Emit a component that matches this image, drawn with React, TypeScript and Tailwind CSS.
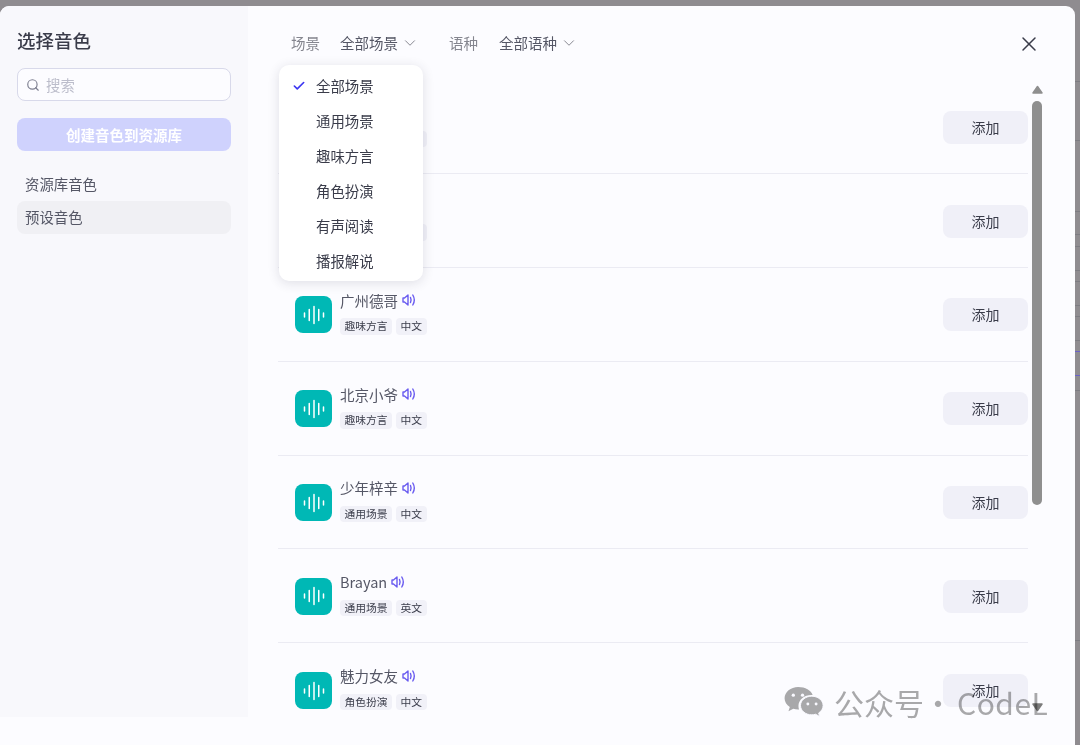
import { Check, ChevronDown, Search, X } from "lucide-react";

const rows = [
  { name: "", tag: "通用场景", lang: "中文" },
  { name: "", tag: "通用场景", lang: "中文" },
  { name: "广州德哥", tag: "趣味方言", lang: "中文" },
  { name: "北京小爷", tag: "趣味方言", lang: "中文" },
  { name: "少年梓辛", tag: "通用场景", lang: "中文" },
  { name: "Brayan", tag: "通用场景", lang: "英文" },
  { name: "魅力女友", tag: "角色扮演", lang: "中文" },
];

const scenes = ["全部场景", "通用场景", "趣味方言", "角色扮演", "有声阅读", "播报解说"];

// faint lines of the page behind the modal, seen in the strip on the right
const backLines = [
  { y: 81, c: "#7d7c82" },
  { y: 140, c: "#7d7c82" },
  { y: 211, c: "#7d7c82" },
  { y: 234, c: "#7d7c82" },
  { y: 246, c: "#7d7c82" },
  { y: 270, c: "#7d7c82" },
  { y: 281, c: "#7d7c82" },
  { y: 305, c: "#7d7c82" },
  { y: 316, c: "#7d7c82" },
  { y: 340, c: "#7d7c82" },
  { y: 351, c: "#6a62c8" },
  { y: 375, c: "#6a62c8" },
  { y: 390, c: "#7d7c82" },
  { y: 640, c: "#7d7c82" },
];

function WaveIcon() {
  return (
    <div className="flex h-[37px] w-[37px] shrink-0 items-center justify-center rounded-[8px] bg-[#00b8b5]">
      <svg width="22" height="20" viewBox="0 0 22 20" fill="none" stroke="#ffffff" strokeWidth="1.5" strokeLinecap="round">
        <path d="M1.500 8v4M6.250 4.500v11M11 1.500v17M15.750 4.500v11M20.500 8v4" />
      </svg>
    </div>
  );
}

function SpeakerIcon() {
  return (
    <svg width="14" height="14" viewBox="0 0 14 14" fill="none" stroke="#6a5cf0" strokeWidth="1.4" strokeLinecap="round" strokeLinejoin="round">
      <path d="M1 5v4h1.500L6 12V2L2.500 5H1z" />
      <path d="M8.500 4.500c.7 1.500.7 3.500 0 5" />
      <path d="M10.800 2c1.800 3 1.800 7 0 10" />
    </svg>
  );
}

function Tag({ children }: { children: string }) {
  return (
    <span className="flex h-[16.5px] items-center rounded-[4px] bg-[#f1f1f8] px-[4.5px] text-[10.75px] text-[#3a3c4a]">
      {children}
    </span>
  );
}

function VoiceRow({ name, tag, lang, last }: { name: string; tag: string; lang: string; last: boolean }) {
  return (
    <div className={`flex h-[93.8px] shrink-0 items-center pt-[1px] pl-[17px] ${last ? "" : "border-b border-[#ebebf3]"}`}>
      <WaveIcon />
      <div className="mb-[4.5px] ml-2 flex flex-col gap-[8.5px]">
        <div className="flex h-[19px] items-center gap-1">
          <span className="text-[14.5px] leading-[19px] text-[#555766]">{name}</span>
          <SpeakerIcon />
        </div>
        <div className="flex gap-1">
          <Tag>{tag}</Tag>
          <Tag>{lang}</Tag>
        </div>
      </div>
      <button className="ml-auto h-[33px] w-[85px] rounded-[8px] bg-[#f0f0f8] text-[14px] text-[#3a3c4a]">添加</button>
    </div>
  );
}

export default function App() {
  return (
    <div
      className="relative h-[745px] w-[1080px] overflow-hidden bg-[#8f8c90] pt-[6px]"
      style={{ fontFamily: '"Noto Sans CJK SC", "Noto Sans", sans-serif' }}
    >
      {backLines.map((l) => (
        <div key={l.y} className="absolute right-0 h-px w-[5px]" style={{ top: l.y, backgroundColor: l.c }} />
      ))}

      <div className="relative flex h-[760px] w-[1075px] overflow-hidden rounded-[9px] bg-[#fcfcff]">
        {/* sidebar */}
        <aside className="flex h-[711px] w-[248px] shrink-0 flex-col bg-[#f8f8fc] px-[17px]">
          <h2 className="mt-[21px] text-[18.5px] leading-[27px] font-medium text-[#3a3c4a]">选择音色</h2>
          <div className="mt-[14px] flex h-[33px] items-center gap-[6px] rounded-[8px] border border-[#d8d9ea] bg-[#fcfcff] px-2">
            <Search size={14} color="#7d7f90" />
            <span className="text-[14.4px] text-[#bcbdcb]">搜索</span>
          </div>
          <button className="mt-[17px] h-[33px] rounded-[8px] bg-[#cfd2fd] text-[14.5px] font-semibold text-white">创建音色到资源库</button>
          <div className="mt-[17px] flex h-[33px] items-center px-2 pb-[1px] text-[14.4px] text-[#555766]">资源库音色</div>
          <div className="flex h-[32.5px] items-center rounded-[8px] bg-[#f0f0f4] px-2 text-[14.4px] text-[#555766]">预设音色</div>
        </aside>

        {/* main */}
        <main className="flex h-[711px] min-w-0 flex-1 flex-col overflow-hidden pl-[30px]">
          <div className="flex h-[74.5px] shrink-0 items-center pl-[13px] text-[14.5px] text-[#555766]">
            <span className="text-[#85868f]">场景</span>
            <span className="ml-[20px]">全部场景</span>
            <ChevronDown size={18} strokeWidth={1.3} className="ml-[2.5px] text-[#85868f]" />
            <span className="ml-[30.5px] text-[#85868f]">语种</span>
            <span className="ml-[21px]">全部语种</span>
            <ChevronDown size={18} strokeWidth={1.3} className="ml-[2.5px] text-[#85868f]" />
          </div>
          <div className="flex w-[750px] flex-col">
            {rows.map((r, i) => (
              <VoiceRow key={i} {...r} last={i === rows.length - 1} />
            ))}
          </div>
        </main>

        {/* close */}
        <button className="absolute top-[25.5px] left-[1016.5px] text-[#3a3c4a]">
          <X size={24} strokeWidth={1.5} />
        </button>

        {/* dropdown */}
        <div className="absolute top-[59px] left-[279px] w-[144px] rounded-[10px] bg-white py-[3.5px] shadow-[0_2px_12px_rgba(40,40,70,0.14)]">
          {scenes.map((s, i) => (
            <div key={s} className="flex h-[34.9px] items-center text-[14.4px] text-[#3a3c4a]">
              <span className="flex w-[37px] justify-end pr-[10px]">
                {i === 0 && <Check size={14} strokeWidth={2.8} color="#3b35f2" />}
              </span>
              {s}
            </div>
          ))}
        </div>

        {/* scrollbar */}
        <div className="absolute top-[79px] left-[1032px] flex h-[627px] w-[10px] flex-col items-center">
          <svg width="11" height="9" viewBox="0 0 11 9" className="shrink-0">
            <path d="M5.500 1.500L10 8H1z" fill="#8f8f8f" stroke="#8f8f8f" strokeWidth="1.500" strokeLinejoin="round" />
          </svg>
          <div className="mt-[7px] h-[404px] w-[10px] shrink-0 rounded-full bg-[#8f8f8f]" />
          <svg width="11" height="9" viewBox="0 0 11 9" className="mt-auto shrink-0">
            <path d="M5.500 7.500L10 1H1z" fill="#7c7c7c" stroke="#7c7c7c" strokeWidth="1.500" strokeLinejoin="round" />
          </svg>
        </div>

        {/* watermark */}
        <div className="absolute top-[679px] left-[783px] flex items-center text-[#aaaaaa] mix-blend-multiply">
          <svg width="41" height="33" viewBox="0 0 41 34" fill="#aaaaaa">
            <path d="M15 1C7.300 1 1 6.200 1 12.600c0 3.700 2.100 7 5.400 9.100L5 26l5-2.600c1.500.4 3.100.7 4.900.7h1c-.4-1.200-.6-2.400-.6-3.600 0-6.300 6-11.300 13.400-11.300h1.200C28.400 4.600 22.300 1 15 1z" />
            <path d="M29 10.500c-6.400 0-11.600 4.300-11.600 9.600s5.200 9.600 11.600 9.600c1.400 0 2.700-.2 4-.6l4.200 2.400-1.100-3.700c2.800-1.800 4.600-4.600 4.600-7.700 0-5.300-5.300-9.600-11.700-9.600z" stroke="#fcfcff" strokeWidth="1" />
            <circle cx="10" cy="9.500" r="1.700" fill="#fcfcff" />
            <circle cx="19.500" cy="9.500" r="1.700" fill="#fcfcff" />
            <circle cx="25" cy="18.500" r="1.500" fill="#fcfcff" />
            <circle cx="33.500" cy="18.500" r="1.500" fill="#fcfcff" />
          </svg>
          <span className="ml-[10px] text-[30px] leading-[34px] whitespace-nowrap">公众号</span>
          <span className="ml-[-1px] text-[30px] leading-[34px]">·</span>
          <span className="ml-[4px] text-[30px] leading-[34px] tracking-[0.5px] whitespace-nowrap">CodeL</span>
        </div>
      </div>
    </div>
  );
}
